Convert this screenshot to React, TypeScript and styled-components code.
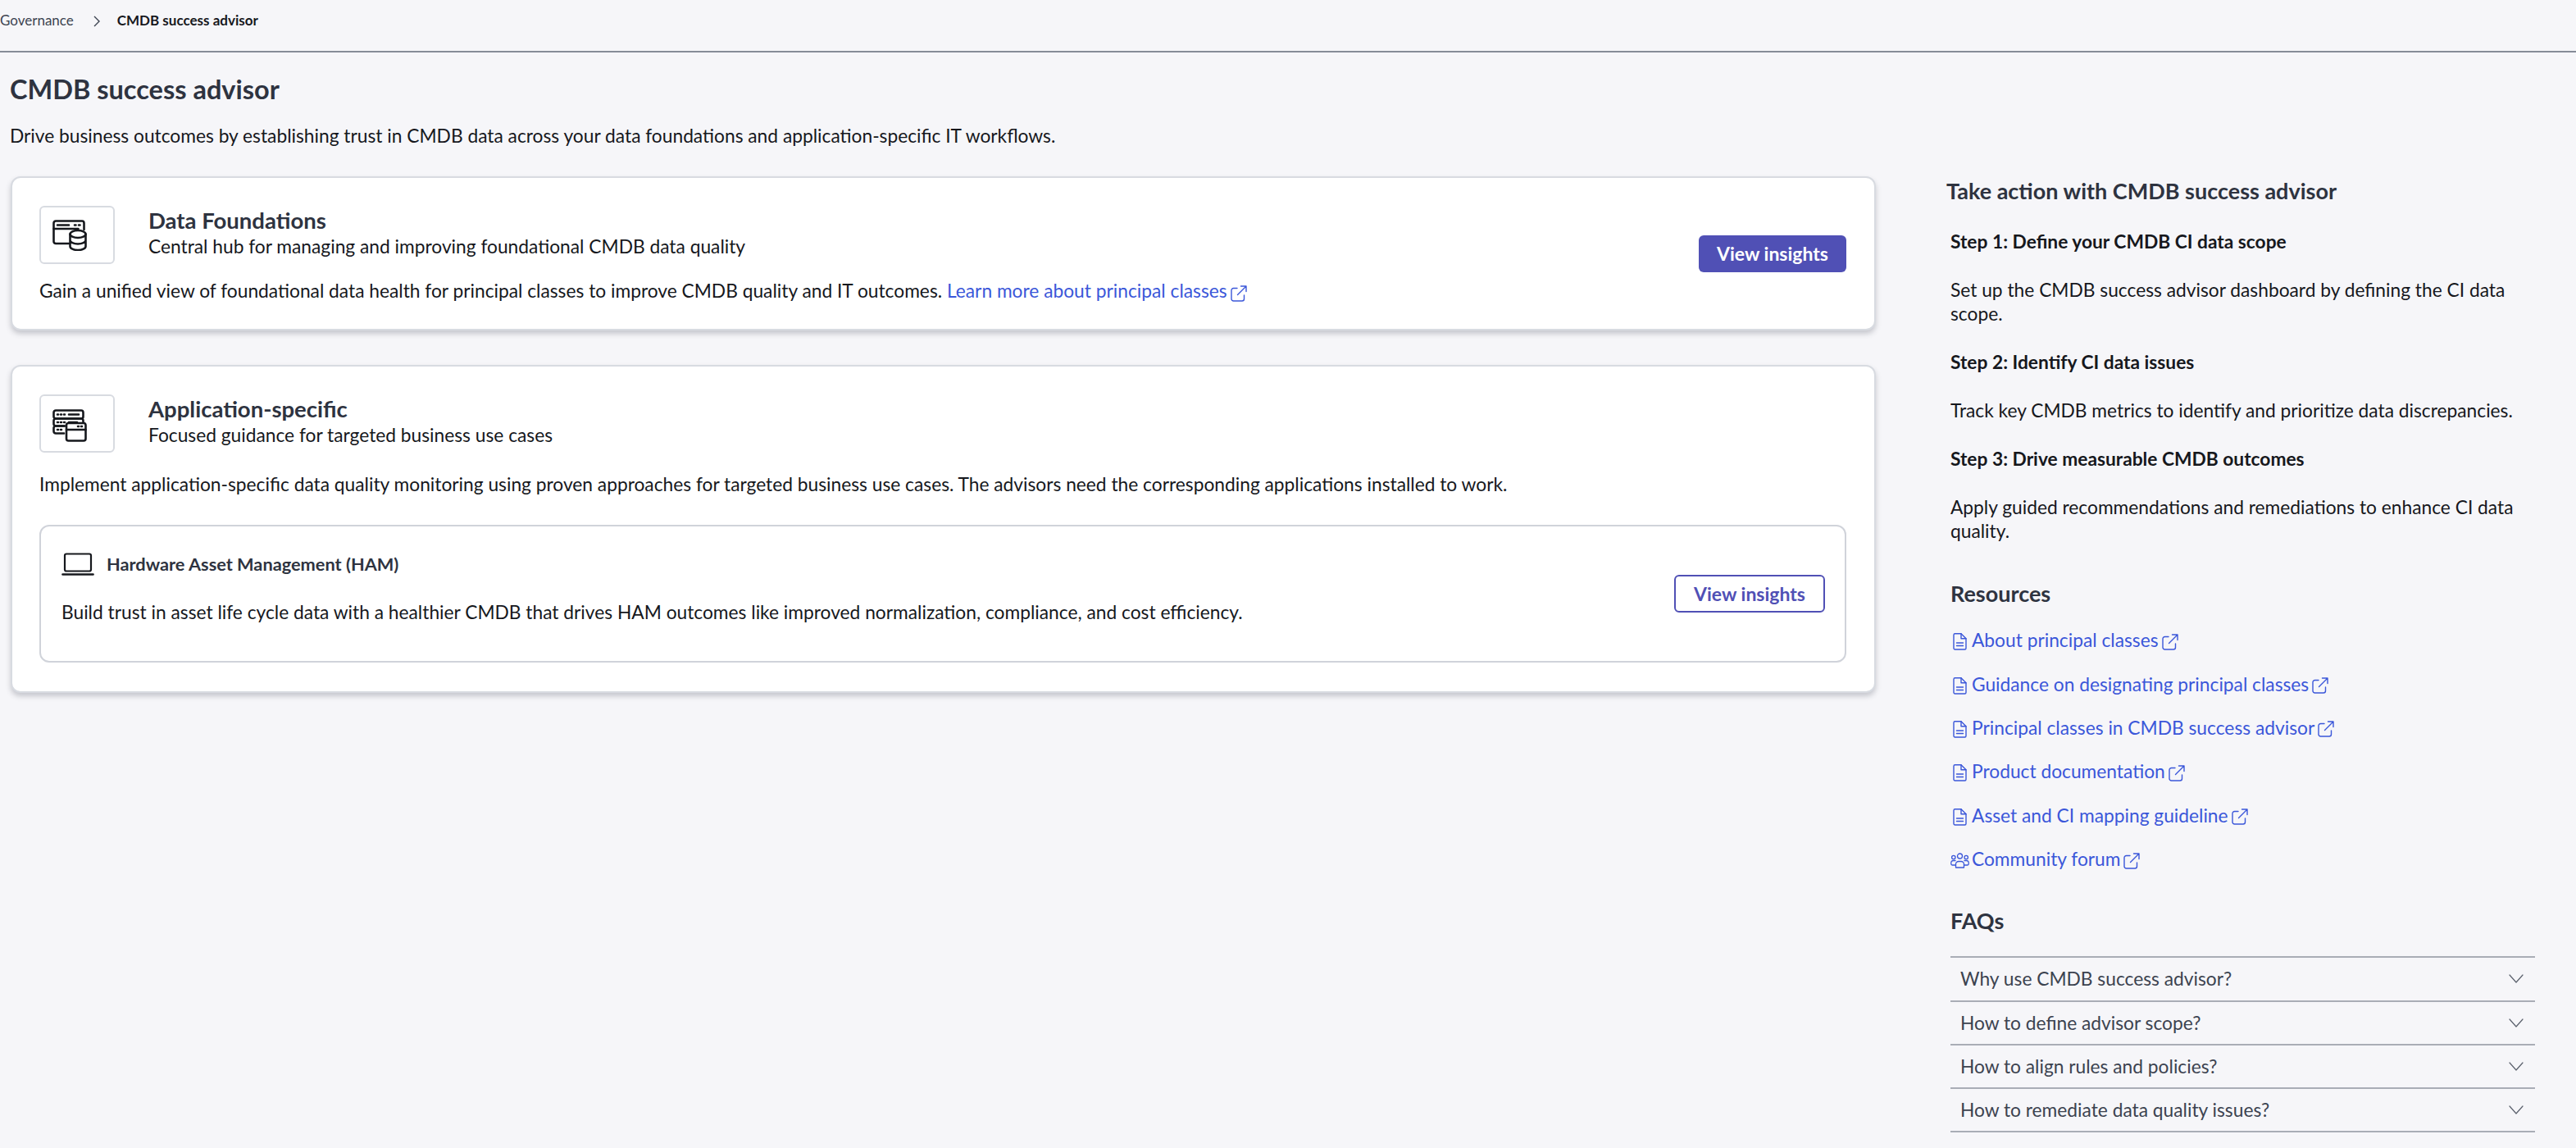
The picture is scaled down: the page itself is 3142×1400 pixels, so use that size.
import { ReactNode } from 'react';
import styled, { createGlobalStyle } from 'styled-components';

const GlobalStyle = createGlobalStyle`
	html, body {
		margin: 0;
		padding: 0;
		background: #f6f6f9;
		font-family: Lato, "Open Sans", sans-serif;
		color: #16181d;
		overflow: hidden;
	}
	* {
		box-sizing: border-box;
	}
`;

const Page = styled.div`
	width: 3142px;
	height: 1400px;
	overflow: hidden;
	background: #f6f6f9;
`;

const TopBar = styled.div`
	height: 64px;
	border-bottom: 2px solid #868c98;
	display: flex;
	align-items: flex-start;
	padding-top: 14px;
	font-size: 17px;
	line-height: 22px;
`;

const Crumb = styled.span<{ $current?: boolean }>`
	color: ${(props) => (props.$current ? '#16181d' : '#3c4350')};
	font-weight: ${(props) => (props.$current ? 700 : 400)};
`;

const CrumbChevron = styled.svg`
	width: 12px;
	height: 14px;
	margin: 5px 19px 0 22px;
`;

const Content = styled.div`
	display: grid;
	grid-template-columns: 2288px 1fr;
`;

const MainColumn = styled.main`
	padding-left: 13px;
`;

const PageTitle = styled.h1`
	margin: 25px 0 0 -1px;
	font-size: 32.5px;
	line-height: 40px;
	font-weight: 700;
	color: #2e3340;
`;

const PageLead = styled.p`
	margin: 22px 0 0 -1px;
	font-size: 22.75px;
	line-height: 30px;
`;

const Card = styled.section<{ $height: number; $top: number }>`
	margin-top: ${(props) => props.$top}px;
	height: ${(props) => props.$height}px;
	background: #fff;
	border: 2px solid #d8dbe1;
	border-radius: 12px;
	box-shadow: 0 4px 6px rgba(60, 66, 80, 0.26);
	padding: 34px 34px 34px 33px;
`;

const CardSplit = styled.div`
	height: 100%;
	display: flex;
	align-items: center;
	justify-content: space-between;
`;

const CardLeft = styled.div`
	align-self: flex-start;
`;

const CardHead = styled.div`
	display: flex;
	gap: 41px;
`;

const IconTile = styled.div`
	width: 92px;
	height: 71px;
	border: 2px solid #d8dbe1;
	border-radius: 6px;
	padding-left: 14px;
	display: flex;
	align-items: center;
`;

const TileGlyph = styled.svg<{ $drop?: number }>`
	margin-top: ${(props) => props.$drop ?? 0}px;
`;

const CardTitle = styled.h2`
	margin: 0;
	font-size: 27.5px;
	line-height: 36px;
	font-weight: 700;
	color: #2e3340;
`;

const CardSub = styled.p`
	margin: -1px 0 0;
	font-size: 22.75px;
	line-height: 30px;
`;

const CardBody = styled.p<{ $gap: number }>`
	margin: ${(props) => props.$gap}px 0 0;
	font-size: 22.75px;
	line-height: 30px;
`;

const TextLink = styled.a`
	color: #3b57d9;
`;

const LinkGlyph = styled.svg<{ $w: number; $h: number }>`
	width: ${(props) => props.$w}px;
	height: ${(props) => props.$h}px;
	flex: none;
`;

const InlineExternal = styled.span`
	margin-left: 4px;
	svg {
		vertical-align: -5px;
	}
`;

const PrimaryButton = styled.button`
	width: 180px;
	height: 45px;
	border: none;
	border-radius: 6px;
	background: #5050b5;
	color: #fff;
	font-family: inherit;
	font-size: 23px;
	font-weight: 700;
`;

const OutlineButton = styled.button`
	width: 184px;
	height: 46px;
	border: 2px solid #5050b5;
	border-radius: 6px;
	background: #fff;
	color: #5050b5;
	font-family: inherit;
	font-size: 23px;
	font-weight: 700;
`;

const InnerCard = styled.div`
	margin-top: 34px;
	height: 168px;
	width: 2204px;
	border: 2px solid #d0d3da;
	border-radius: 12px;
	padding: 0 24px 0 25px;
	display: flex;
	align-items: center;
	justify-content: space-between;
`;

const InnerText = styled.div`
	align-self: flex-start;
	padding-top: 26px;
`;

const InnerHead = styled.div`
	display: flex;
	align-items: center;
	gap: 15px;
	height: 40px;
`;

const InnerTitle = styled.h3`
	margin: 0;
	font-size: 21.75px;
	line-height: 30px;
	font-weight: 700;
	color: #2e3340;
`;

const InnerBody = styled.p`
	margin: 24px 0 0;
	font-size: 22.75px;
	line-height: 30px;
`;

const Aside = styled.aside`
	padding: 0 50px 0 86px;
`;

const AsideTitle = styled.h2`
	margin: 151px 0 0;
	font-size: 27px;
	line-height: 36px;
	font-weight: 700;
	color: #2e3340;
`;

const StepBlock = styled.div`
	margin-top: -1px;
	padding-left: 5px;
`;

const StepTitle = styled.h4`
	margin: 31px 0 0;
	font-size: 22.75px;
	line-height: 28px;
	font-weight: 700;
`;

const StepText = styled.p`
	margin: 30px 0 0;
	font-size: 22.75px;
	line-height: 29px;
`;

const SectionTitle = styled.h3<{ $top: number }>`
	margin: ${(props) => props.$top}px 0 0;
	padding-left: 5px;
	font-size: 27px;
	line-height: 36px;
	font-weight: 700;
	color: #2e3340;
`;

const LinkList = styled.ul`
	margin: 12px 0 0;
	padding: 0 0 0 5px;
	list-style: none;
`;

const ResourceItem = styled.li`
	height: 53.4px;
	display: flex;
	align-items: center;
	font-size: 22.75px;
	color: #3b57d9;
`;

const IconSlot = styled.span`
	width: 26px;
	padding: 4px 3px 0 0;
	flex: none;
	display: flex;
	justify-content: center;
`;

const ResourceExternal = styled.span`
	margin-left: 4px;
	padding-top: 4px;
	display: flex;
`;

const FaqList = styled.div`
	margin: 25px 0 0 5px;
	width: 713px;
	border-top: 2px solid #a9adb6;
`;

const FaqRow = styled.div`
	height: 53.25px;
	border-bottom: 2px solid #a9adb6;
	padding: 0 14px 0 12px;
	display: flex;
	align-items: center;
	justify-content: space-between;
	font-size: 22.75px;
	color: #3c4350;
`;

const DocIcon = () => (
	<LinkGlyph $w={17} $h={21} viewBox="0 0 17 21" fill="none" stroke="currentColor" strokeWidth="1.4" strokeLinejoin="round" strokeLinecap="round">
		<path d="M1 2.200A1.500 1.500 0 0 1 2.500.800h7.500L16 6.800V18.500a1.500 1.500 0 0 1-1.500 1.500h-12A1.500 1.500 0 0 1 1 18.500z" />
		<path d="M10 .800v6h6M4.500 12h8M4.500 15.500h8" />
	</LinkGlyph>
);

const CommunityIcon = () => (
	<LinkGlyph $w={23} $h={19} viewBox="0 0 23 19" fill="none" stroke="currentColor" strokeWidth="1.300" strokeLinecap="round" strokeLinejoin="round">
		<circle cx="11.500" cy="4" r="3" />
		<circle cx="3.800" cy="5.500" r="2.200" />
		<circle cx="19.200" cy="5.500" r="2.200" />
		<path d="M6.500 18v-4a3.500 3.500 0 0 1 3.500-3.500h3a3.500 3.500 0 0 1 3.500 3.500v4z" />
		<path d="M6.500 15H2.200A1.500 1.500 0 0 1 .8 13.500v-1.500A2.500 2.500 0 0 1 3.300 9.500H6M16.500 15h4.300a1.500 1.500 0 0 0 1.400-1.500v-1.500a2.500 2.500 0 0 0-2.500-2.500H17" />
	</LinkGlyph>
);

const ExternalIcon = () => (
	<LinkGlyph $w={20} $h={20} viewBox="0 0 20 20" fill="none" stroke="currentColor" strokeWidth="1.400" strokeLinecap="round" strokeLinejoin="round">
		<path d="M8 3.500H3.500A2.500 2.500 0 0 0 1 6v10.500A2.500 2.500 0 0 0 3.500 19H14a2.500 2.500 0 0 0 2.500-2.500V12" />
		<path d="M8.500 11.500 19 1M12.500 1H19v6.500" />
	</LinkGlyph>
);

const DataFoundationIcon = () => (
	<TileGlyph width="42" height="38" viewBox="0 0 42 38" fill="none" stroke="#16181d" strokeWidth="2.600" strokeLinecap="round" strokeLinejoin="round">
		<path d="M20 29H4A2.500 2.500 0 0 1 1.500 26.500V4A2.500 2.500 0 0 1 4 1.500h32A2.500 2.500 0 0 1 38.500 4V12" />
		<path d="M1.500 11h30M6 6.500h14" />
		<path d="M27 6.500h1.500M32 6.500h1.500" />
		<ellipse cx="31" cy="17.500" rx="9.500" ry="4.500" />
		<path d="M21.500 17.500v15c0 2.500 4.300 4.500 9.500 4.500s9.500-2 9.500-4.500v-15M21.500 25c0 2.500 4.300 4.500 9.500 4.500s9.500-2 9.500-4.500" />
	</TileGlyph>
);

const ApplicationIcon = () => (
	<TileGlyph $drop={5} width="42" height="40" viewBox="0 0 42 40" fill="none" stroke="#16181d" strokeWidth="2.600" strokeLinecap="round" strokeLinejoin="round">
		<rect x="1.500" y="1.500" width="36" height="10" rx="2.500" />
		<path d="M15 20.500H4A2.500 2.500 0 0 1 1.500 18V14A2.500 2.500 0 0 1 4 11.500h31A2.500 2.500 0 0 1 37.500 14V16" />
		<path d="M14 29.500H4A2.500 2.500 0 0 1 1.500 27V23A2.500 2.500 0 0 1 4 20.500H14" />
		<path d="M6 6.500h1M10 6.500h1M14 6.500h1M20 6.500h12M6 16h1M10 16h1M14 16h1M20 16h10M6 25h1M10 25h1" />
		<rect x="17" y="17" width="23.500" height="21.500" rx="2.500" />
		<path d="M17 25h23.500M31 21h1M35 21h1" />
	</TileGlyph>
);

const LaptopIcon = () => (
	<svg width="40" height="28" viewBox="0 0 40 28" fill="none" stroke="#16181d" strokeWidth="2.200" strokeLinecap="round" strokeLinejoin="round">
		<rect x="4" y="1.500" width="32" height="21" rx="2" />
		<path d="M1.500 26.500h37" strokeWidth="2.600" />
	</svg>
);

const ChevronDown = () => (
	<svg width="18" height="11" viewBox="0 0 18 11" fill="none" stroke="#5a606c" strokeWidth="1.200" strokeLinecap="round" strokeLinejoin="round">
		<path d="M1 1l8 9 8-9" />
	</svg>
);

const resources: { label: string; icon: ReactNode }[] = [
	{ label: 'About principal classes', icon: <DocIcon /> },
	{ label: 'Guidance on designating principal classes', icon: <DocIcon /> },
	{ label: 'Principal classes in CMDB success advisor', icon: <DocIcon /> },
	{ label: 'Product documentation', icon: <DocIcon /> },
	{ label: 'Asset and CI mapping guideline', icon: <DocIcon /> },
	{ label: 'Community forum', icon: <CommunityIcon /> },
];

const faqs = [
	'Why use CMDB success advisor?',
	'How to define advisor scope?',
	'How to align rules and policies?',
	'How to remediate data quality issues?',
];

const App = () => {
	return (
		<Page>
			<GlobalStyle />
			<TopBar>
				<Crumb>Governance</Crumb>
				<CrumbChevron viewBox="0 0 12 14" fill="none" stroke="#3c4350" strokeWidth="1.400">
					<path d="M3 1l6 6-6 6" />
				</CrumbChevron>
				<Crumb $current>CMDB success advisor</Crumb>
			</TopBar>
			<Content>
				<MainColumn>
					<PageTitle>CMDB success advisor</PageTitle>
					<PageLead>
						Drive business outcomes by establishing trust in CMDB data across your data foundations and application-specific IT workflows.
					</PageLead>
					<Card $top={34} $height={188}>
						<CardSplit>
							<CardLeft>
								<CardHead>
									<IconTile>
										<DataFoundationIcon />
									</IconTile>
									<div>
										<CardTitle>Data Foundations</CardTitle>
										<CardSub>Central hub for managing and improving foundational CMDB data quality</CardSub>
									</div>
								</CardHead>
								<CardBody $gap={18}>
									Gain a unified view of foundational data health for principal classes to improve CMDB quality and IT outcomes.{' '}
									<TextLink>
										Learn more about principal classes
										<InlineExternal>
											<ExternalIcon />
										</InlineExternal>
									</TextLink>
								</CardBody>
							</CardLeft>
							<PrimaryButton>View insights</PrimaryButton>
						</CardSplit>
					</Card>
					<Card $top={42} $height={400}>
						<CardHead>
							<IconTile>
								<ApplicationIcon />
							</IconTile>
							<div>
								<CardTitle>Application-specific</CardTitle>
								<CardSub>Focused guidance for targeted business use cases</CardSub>
							</div>
						</CardHead>
						<CardBody $gap={24}>
							Implement application-specific data quality monitoring using proven approaches for targeted business use cases. The advisors need the corresponding applications installed to work.
						</CardBody>
						<InnerCard>
							<InnerText>
								<InnerHead>
									<LaptopIcon />
									<InnerTitle>Hardware Asset Management (HAM)</InnerTitle>
								</InnerHead>
								<InnerBody>
									Build trust in asset life cycle data with a healthier CMDB that drives HAM outcomes like improved normalization, compliance, and cost efficiency.
								</InnerBody>
							</InnerText>
							<OutlineButton>View insights</OutlineButton>
						</InnerCard>
					</Card>
				</MainColumn>
				<Aside>
					<AsideTitle>Take action with CMDB success advisor</AsideTitle>
					<StepBlock>
						<StepTitle>Step 1: Define your CMDB CI data scope</StepTitle>
						<StepText>Set up the CMDB success advisor dashboard by defining the CI data scope.</StepText>
						<StepTitle>Step 2: Identify CI data issues</StepTitle>
						<StepText>Track key CMDB metrics to identify and prioritize data discrepancies.</StepText>
						<StepTitle>Step 3: Drive measurable CMDB outcomes</StepTitle>
						<StepText>Apply guided recommendations and remediations to enhance CI data quality.</StepText>
					</StepBlock>
					<SectionTitle $top={44}>Resources</SectionTitle>
					<LinkList>
						{resources.map((item) => (
							<ResourceItem key={item.label}>
								<IconSlot>{item.icon}</IconSlot>
								<span>{item.label}</span>
								<ResourceExternal>
									<ExternalIcon />
								</ResourceExternal>
							</ResourceItem>
						))}
					</LinkList>
					<SectionTitle $top={31}>FAQs</SectionTitle>
					<FaqList>
						{faqs.map((question) => (
							<FaqRow key={question}>
								<span>{question}</span>
								<ChevronDown />
							</FaqRow>
						))}
					</FaqList>
				</Aside>
			</Content>
		</Page>
	);
};

export default App;
